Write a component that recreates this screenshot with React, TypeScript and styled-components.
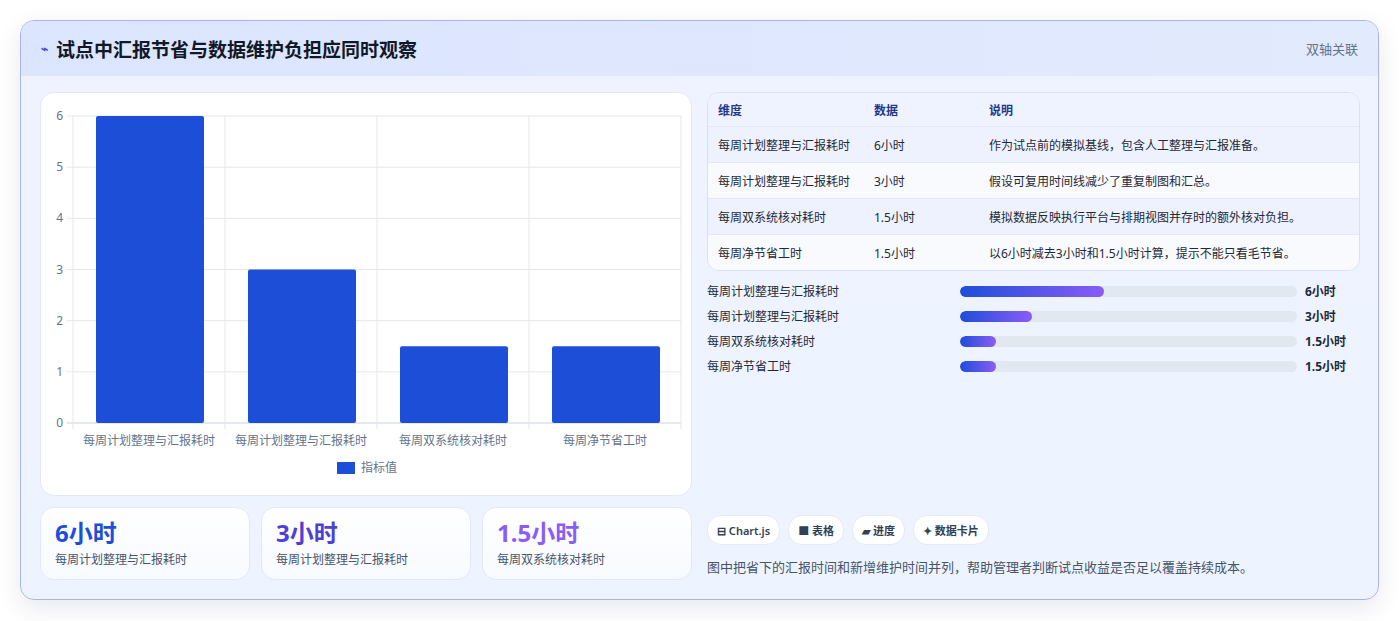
import React from 'react';
import styled, { createGlobalStyle } from 'styled-components';

const Global = createGlobalStyle`
  body { margin: 0; background: #f3f4f6; font-family: "Noto Sans", "Noto Sans CJK SC", sans-serif; }
`;

const Page = styled.div`
  padding: 20px 20px 20px 20px;
  height: 621px;
  box-sizing: border-box;
  background: #fff;
`;
const Card = styled.div`
  border: 1px solid #aab6e6;
  border-radius: 14px;
  background: linear-gradient(180deg, #eef3ff, #eef4ff);
  box-shadow: 0 8px 24px rgba(30, 41, 90, 0.1);
  overflow: hidden;
  height: 580px;
  box-sizing: border-box;
`;
const Header = styled.div`
  height: 55px;
  display: flex;
  align-items: center;
  justify-content: space-between;
  padding: 0 20px;
  background: linear-gradient(90deg, #dbe5ff, #e2eafd);
`;
const Title = styled.h1`
  margin: 0;
  font-size: 19px;
  font-weight: 700;
  color: #111827;
  display: flex;
  align-items: center;
  gap: 8px;
`;
const HeaderTag = styled.span`
  font-size: 13px;
  color: #64748b;
`;
const Body = styled.div`
  display: grid;
  grid-template-columns: 652px 1fr;
  gap: 15px;
  padding: 16px 18px 18px 19px;
`;
const Left = styled.div`
  display: flex;
  flex-direction: column;
  gap: 11px;
`;
const ChartCard = styled.div`
  height: 404px;
  background: #fff;
  border: 1px solid #e3e8f4;
  border-radius: 14px;
  box-sizing: border-box;
`;
const Stats = styled.div`
  display: grid;
  grid-template-columns: repeat(3, 1fr);
  gap: 11px;
`;
const Stat = styled.div`
  height: 73px;
  box-sizing: border-box;
  background: linear-gradient(180deg, #fff, #f7faff);
  border: 1px solid #e3e8f4;
  border-radius: 14px;
  padding: 8px 14px;
`;
const StatValue = styled.div<{ $c: string }>`
  font-size: 24px;
  font-weight: 700;
  line-height: 34px;
  color: ${p => p.$c};
`;
const StatLabel = styled.div`
  font-size: 12px;
  color: #475569;
`;
const Right = styled.div`
  display: flex;
  flex-direction: column;
`;
const Table = styled.div`
  border: 1px solid #d9e0ef;
  border-radius: 12px;
  overflow: hidden;
  background: #fff;
`;
const Row = styled.div<{ $bg: string; $h: number }>`
  display: grid;
  grid-template-columns: 156px 115px 1fr;
  height: ${p => p.$h}px;
  align-items: center;
  padding: 0 10px;
  background: ${p => p.$bg};
  border-bottom: 1px solid #e3e8f2;
  font-size: 12px;
  color: #1f2937;
  &:last-child { border-bottom: none; }
`;
const HeadRow = styled(Row)`
  color: #1e3a8a;
  font-weight: 700;
`;
const Bars = styled.div`
  display: flex;
  flex-direction: column;
  gap: 8px;
  margin-top: 11px;
`;
const BarRow = styled.div`
  display: grid;
  grid-template-columns: 245px 337px 1fr;
  align-items: center;
  gap: 8px;
  font-size: 12px;
  color: #1f2937;
  height: 17px;
`;
const Track = styled.div`
  height: 11px;
  border-radius: 6px;
  background: #e2e8f0;
  overflow: hidden;
`;
const Fill = styled.div`
  height: 100%;
  border-radius: 6px;
  background: linear-gradient(90deg, #1d4ed8, #8b5cf6);
`;
const BarVal = styled.span`
  font-weight: 700;
`;
const Chips = styled.div`
  margin-top: auto;
  display: flex;
  gap: 8px;
`;
const Chip = styled.span`
  height: 28px;
  display: inline-flex;
  align-items: center;
  padding: 0 9px;
  gap: 4px;
  background: #fff;
  border: 1px solid #e5e9f2;
  border-radius: 14px;
  font-size: 11px;
  font-weight: 600;
  color: #334155;
`;
const Caption = styled.p`
  margin: 12px 0 4px;
  font-size: 13px;
  color: #475569;
`;

const labels = ['每周计划整理与汇报耗时', '每周计划整理与汇报耗时', '每周双系统核对耗时', '每周净节省工时'];
const values = [6, 3, 1.5, 1.5];
const units = ['6小时', '3小时', '1.5小时', '1.5小时'];
const notes = [
  '作为试点前的模拟基线，包含人工整理与汇报准备。',
  '假设可复用时间线减少了重复制图和汇总。',
  '模拟数据反映执行平台与排期视图并存时的额外核对负担。',
  '以6小时减去3小时和1.5小时计算，提示不能只看毛节省。',
];

const Chart = () => {
  const x0 = 32, x1 = 640, yTop = 23, yBot = 330;
  const step = (x1 - x0) / 4;
  const yOf = (v: number) => yBot - (v / 6) * (yBot - yTop);
  return (
    <svg width="652" height="404" fontFamily='"Noto Sans","Noto Sans CJK SC",sans-serif'>
      {[0, 1, 2, 3, 4, 5, 6].map(v => (
        <g key={v}>
          <line x1={x0 - 6} x2={x1} y1={yOf(v)} y2={yOf(v)} stroke={v === 0 ? '#cbd2de' : '#e5e7eb'} />
          <text x={22} y={yOf(v) + 4} fontSize="12" fill="#64748b" textAnchor="end">{v}</text>
        </g>
      ))}
      {[0, 1, 2, 3, 4].map(i => (
        <line key={i} x1={x0 + i * step} x2={x0 + i * step} y1={yTop} y2={yBot + 6} stroke="#e5e7eb" />
      ))}
      {values.map((v, i) => (
        <g key={i}>
          <rect x={x0 + i * step + 23} y={yOf(v)} width={108} height={yBot - yOf(v)} fill="#1d4ed8" rx="2" />
          <text x={x0 + i * step + step / 2} y={352} fontSize="12" fill="#64748b" textAnchor="middle">{labels[i]}</text>
        </g>
      ))}
      <rect x={296} y={369} width={18} height={12} fill="#1d4ed8" />
      <text x={320} y={379} fontSize="12" fill="#64748b">指标值</text>
    </svg>
  );
};

export default function App() {
  return (
    <Page>
      <Global />
      <Card>
        <Header>
          <Title><span style={{ color: '#4f46e5', fontSize: 12 }}>⌁</span>试点中汇报节省与数据维护负担应同时观察</Title>
          <HeaderTag>双轴关联</HeaderTag>
        </Header>
        <Body>
          <Left>
            <ChartCard><Chart /></ChartCard>
            <Stats>
              <Stat><StatValue $c="#1d4ed8">6小时</StatValue><StatLabel>每周计划整理与汇报耗时</StatLabel></Stat>
              <Stat><StatValue $c="#4f3fd6">3小时</StatValue><StatLabel>每周计划整理与汇报耗时</StatLabel></Stat>
              <Stat><StatValue $c="#8b5cf6">1.5小时</StatValue><StatLabel>每周双系统核对耗时</StatLabel></Stat>
            </Stats>
          </Left>
          <Right>
            <Table>
              <HeadRow $bg="#eef3ff" $h={33}><span>维度</span><span>数据</span><span>说明</span></HeadRow>
              {labels.map((l, i) => (
                <Row key={i} $bg={i % 2 === 0 ? '#eef2fe' : '#f8fafd'} $h={35}>
                  <span>{l}</span><span>{units[i]}</span><span>{notes[i]}</span>
                </Row>
              ))}
            </Table>
            <Bars>
              {labels.map((l, i) => (
                <BarRow key={i}>
                  <span>{l}</span>
                  <Track><Fill style={{ width: `${(values[i] / 14) * 100}%` }} /></Track>
                  <BarVal>{units[i]}</BarVal>
                </BarRow>
              ))}
            </Bars>
            <Chips>
              <Chip>⊟ Chart.js</Chip>
              <Chip>■ 表格</Chip>
              <Chip>▰ 进度</Chip>
              <Chip>✦ 数据卡片</Chip>
            </Chips>
            <Caption>图中把省下的汇报时间和新增维护时间并列，帮助管理者判断试点收益是否足以覆盖持续成本。</Caption>
          </Right>
        </Body>
      </Card>
    </Page>
  );
}
